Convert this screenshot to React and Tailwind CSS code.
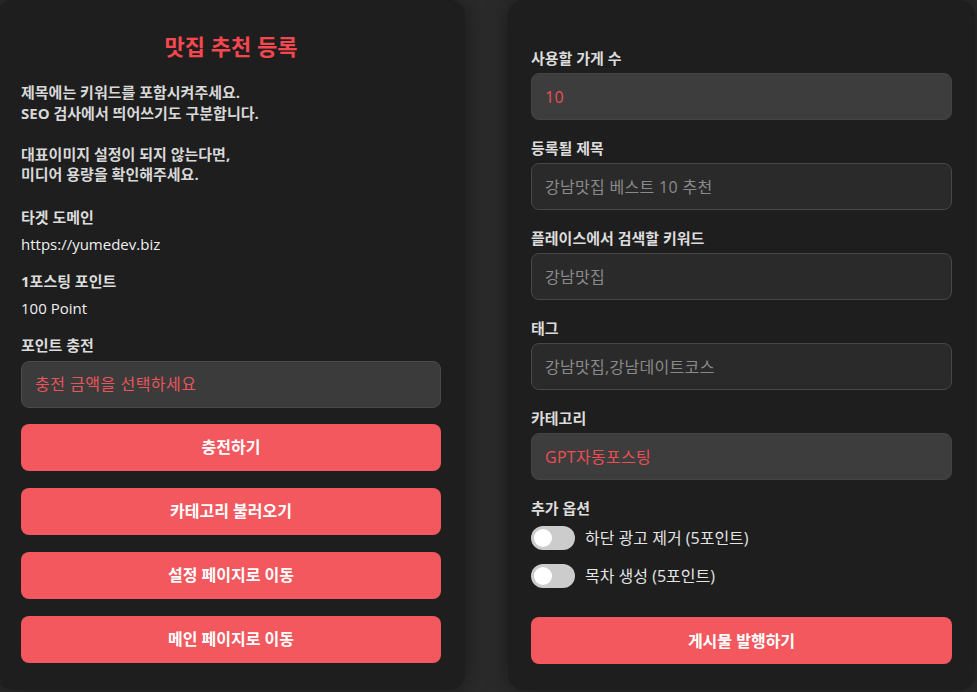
import React, { useState } from 'react';

const font = { fontFamily: '"Open Sans", "Noto Sans CJK KR", sans-serif' };

const Label = ({ children }) => (
  <div className="text-[15px] font-bold text-[#dcdcdc] leading-[20px]">{children}</div>
);

const RedButton = ({ children }) => (
  <button className="w-full h-[47px] rounded-lg bg-[#f2585e] text-white text-[16px] font-bold">
    {children}
  </button>
);

const Toggle = ({ on, onClick, label }) => (
  <div className="flex items-center gap-[10px] h-[25px]">
    <button
      onClick={onClick}
      className={`relative w-[44px] h-[24px] rounded-full ${on ? 'bg-[#f2585e]' : 'bg-[#cccccc]'}`}
    >
      <span
        className={`absolute top-[3px] w-[18px] h-[18px] rounded-full bg-white ${on ? 'left-[23px]' : 'left-[3px]'}`}
      />
    </button>
    <span className="text-[16px] text-[#e4e4e4]">{label}</span>
  </div>
);

const Field = ({ label, value, placeholder, filled }) => (
  <div className="mb-[18px]">
    <Label>{label}</Label>
    <div
      className={`mt-[5px] h-[47px] rounded-lg border flex items-center px-[13px] text-[16px] tracking-[0.3px] ${
        filled
          ? 'bg-[#3d3d3d] border-[#444444] text-[#ee4f55]'
          : 'bg-[#2a2a2a] border-[#474747] text-[#8a8a8a]'
      }`}
    >
      {value || placeholder}
    </div>
  </div>
);

const App = () => {
  const [removeAd, setRemoveAd] = useState(false);
  const [toc, setToc] = useState(false);

  return (
    <div style={font} className="w-full h-[692px] bg-[#2b2b2b] flex gap-[43px] overflow-hidden">
      {/* Left panel */}
      <div className="w-[468px] -ml-[3px] shrink-0 h-[690px] bg-[#1e1e1e] rounded-2xl shadow-[0_0_24px_rgba(0,0,0,0.45)] pl-[24px] pr-[24px] pt-[30px]">
        <h1 className="text-center text-[22px] font-bold text-[#f5474f] leading-[32px]">맛집 추천 등록</h1>
        <div className="mt-[20px] text-[15px] font-bold text-[#d8d8d8] leading-[20.5px]">
          <p>제목에는 키워드를 포함시켜주세요.</p>
          <p>SEO 검사에서 띄어쓰기도 구분합니다.</p>
          <p className="mt-[20.5px]">대표이미지 설정이 되지 않는다면,</p>
          <p>미디어 용량을 확인해주세요.</p>
        </div>
        <div className="mt-[22px]">
          <Label>타겟 도메인</Label>
          <div className="mt-[7px] text-[15px] text-[#f0f0f0] leading-[20px]">https://yumedev.biz</div>
        </div>
        <div className="mt-[17px]">
          <Label>1포스팅 포인트</Label>
          <div className="mt-[7px] text-[15px] text-[#f0f0f0] leading-[20px]">100 Point</div>
        </div>
        <div className="mt-[17px]">
          <Label>포인트 충전</Label>
          <div className="mt-[6px] h-[47px] rounded-lg bg-[#3b3b3b] border border-[#4a4a4a] flex items-center px-[13px] text-[16px] tracking-[0.5px] text-[#e8555b]">
            충전 금액을 선택하세요
          </div>
        </div>
        <div className="mt-[16px] flex flex-col gap-[17px]">
          <RedButton>충전하기</RedButton>
          <RedButton>카테고리 불러오기</RedButton>
          <RedButton>설정 페이지로 이동</RedButton>
          <RedButton>메인 페이지로 이동</RedButton>
        </div>
      </div>

      {/* Right panel */}
      <div className="w-[467px] shrink-0 h-[690px] bg-[#1e1e1e] rounded-2xl shadow-[0_0_24px_rgba(0,0,0,0.45)] px-[23px] pt-[48px]">
        <Field label="사용할 가게 수" value="10" filled />
        <Field label="등록될 제목" placeholder="강남맛집 베스트 10 추천" />
        <Field label="플레이스에서 검색할 키워드" placeholder="강남맛집" />
        <Field label="태그" placeholder="강남맛집,강남데이트코스" />
        <Field label="카테고리" value="GPT자동포스팅" filled />
        <div>
          <Label>추가 옵션</Label>
          <div className="mt-[7px] flex flex-col gap-[13px]">
            <Toggle on={removeAd} onClick={() => setRemoveAd(!removeAd)} label="하단 광고 제거 (5포인트)" />
            <Toggle on={toc} onClick={() => setToc(!toc)} label="목차 생성 (5포인트)" />
          </div>
        </div>
        <div className="mt-[29px]">
          <RedButton>게시물 발행하기</RedButton>
        </div>
      </div>
    </div>
  );
};

export default App;
